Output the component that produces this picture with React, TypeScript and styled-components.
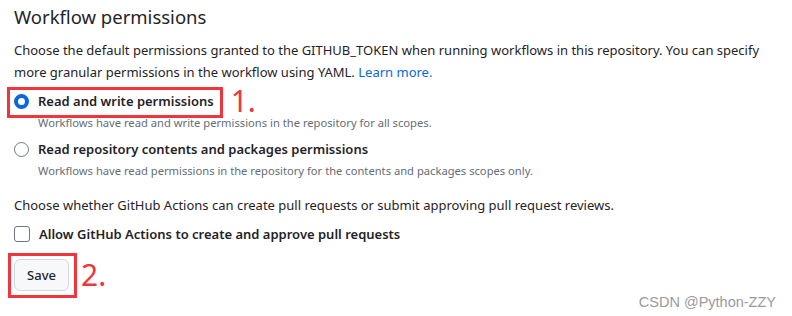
import React from 'react';
import styled, { createGlobalStyle } from 'styled-components';

const GlobalStyle = createGlobalStyle`
  html, body {
    margin: 0;
    padding: 0;
    background: #ffffff;
  }
  body {
    font-family: 'Noto Sans', 'Liberation Sans', sans-serif;
    color: #1f2328;
  }
`;

const Page = styled.div`
  position: relative;
  width: 792px;
  height: 316px;
  box-sizing: border-box;
  padding: 2px 14px 0;
  overflow: hidden;
`;

const Title = styled.h2`
  margin: 0;
  font-size: 18.5px;
  font-weight: 400;
  line-height: 30px;
`;

const Paragraph = styled.p<{ $gap?: number }>`
  margin: ${({ $gap }) => $gap ?? 0}px 0 0;
  font-size: 13px;
  line-height: 22px;
`;

const Link = styled.a`
  color: #0969da;
  text-decoration: none;
`;

const OptionRow = styled.div<{ $height?: number }>`
  display: flex;
  align-items: center;
  height: ${({ $height }) => $height ?? 20}px;
`;

// red annotation frame; negative margins keep it out of the flow
const Highlight = styled.div<{ $pad: [number, number, number, number] }>`
  display: inline-flex;
  align-items: center;
  padding: ${({ $pad }) => $pad.map((p) => `${p}px`).join(' ')};
  margin: ${({ $pad }) => $pad.map((p) => `${-(p + 3)}px`).join(' ')};
  border: 3px solid #f0353d;
`;

const Option = styled.label`
  display: flex;
  align-items: center;
  gap: 9px;
  height: 20px;
  font-size: 13px;
  font-weight: 600;
  line-height: 20px;
  cursor: pointer;
`;

const Radio = styled.span<{ $checked?: boolean }>`
  box-sizing: border-box;
  flex: none;
  width: 15px;
  height: 15px;
  border-radius: 50%;
  border: ${({ $checked }) => ($checked ? '4px solid #0969da' : '1px solid #6e7781')};
  background: #ffffff;
`;

const Checkbox = styled.span`
  box-sizing: border-box;
  flex: none;
  width: 16px;
  height: 16px;
  border-radius: 3px;
  border: 1px solid #6e7781;
  background: #ffffff;
`;

const Note = styled.div`
  margin-top: 3px;
  padding-left: 24px;
  font-size: 11.2px;
  line-height: 18px;
  color: #656d76;
`;

const Group = styled.div<{ $gap: number }>`
  margin-top: ${({ $gap }) => $gap}px;
`;

const Marker = styled.span<{ $offset: number }>`
  margin-left: ${({ $offset }) => $offset}px;
  color: #f0353d;
  font-family: 'Noto Sans', sans-serif;
  font-size: 30px;
  line-height: 20px;
`;

const Button = styled.button`
  box-sizing: border-box;
  height: 32px;
  width: 55px;
  padding: 0;
  border: 1px solid #d0d7de;
  border-radius: 6px;
  background: #f6f8fa;
  color: #1f2328;
  font-family: inherit;
  font-size: 13px;
  font-weight: 500;
`;

const Watermark = styled.div`
  position: absolute;
  right: 16px;
  bottom: 6px;
  font-family: 'Liberation Sans', sans-serif;
  font-size: 14.5px;
  color: #9a9a9a;
`;

export default function App() {
  return (
    <>
      <GlobalStyle />
      <Page>
        <Title>Workflow permissions</Title>
        <Paragraph $gap={7}>
          Choose the default permissions granted to the GITHUB_TOKEN when running workflows in this
          repository. You can specify more granular permissions in the workflow using YAML.{' '}
          <Link href="#">Learn more.</Link>
        </Paragraph>

        <Group $gap={8}>
          <OptionRow>
            <Highlight $pad={[1, 6, 4, 4]}>
              <Option>
                <Radio $checked />
                Read and write permissions
              </Option>
            </Highlight>
            <Marker $offset={17}>1.</Marker>
          </OptionRow>
          <Note>Workflows have read and write permissions in the repository for all scopes.</Note>
        </Group>

        <Group $gap={7}>
          <Option>
            <Radio />
            Read repository contents and packages permissions
          </Option>
          <Note>
            Workflows have read permissions in the repository for the contents and packages scopes
            only.
          </Note>
        </Group>

        <Paragraph $gap={14}>
          Choose whether GitHub Actions can create pull requests or submit approving pull request
          reviews.
        </Paragraph>

        <Group $gap={8}>
          <Option>
            <Checkbox />
            Allow GitHub Actions to create and approve pull requests
          </Option>
        </Group>

        <Group $gap={15}>
          <OptionRow $height={32}>
            <Highlight $pad={[3, 5, 4, 3]}>
              <Button>Save</Button>
            </Highlight>
            <Marker $offset={12}>2.</Marker>
          </OptionRow>
        </Group>

        <Watermark>CSDN @Python-ZZY</Watermark>
      </Page>
    </>
  );
}
